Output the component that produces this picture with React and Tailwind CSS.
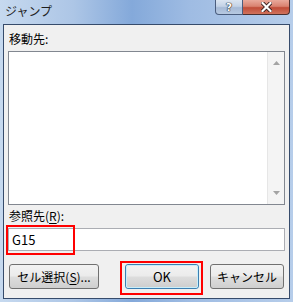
export default function App() {
  const font = { fontFamily: '"Noto Sans CJK JP", "Noto Sans", sans-serif' };
  return (
    <div
      className="relative w-[293px] h-[302px] flex flex-col text-[12px] text-black bg-[linear-gradient(90deg,#c6d9ef_0%,#adc6e6_25%,#84a9da_45%,#9fbce3_65%,#b6cdea_100%)]"
      style={font}
    >
      {/* title bar */}
      <div className="h-[24px] flex items-start shrink-0">
        <div className="pl-[5px] pt-[3px] text-[12px] leading-[16px] text-[#1e1e1e]">ジャンプ</div>
        <div className="ml-auto mr-[3px] flex">
          <div className="w-[28px] h-[15px] border border-t-0 border-[#4a5d7e] rounded-bl-[4px] bg-[linear-gradient(180deg,#dbe5f1_0%,#c3d2e6_45%,#a6bad6_55%,#b7c9e1_100%)] flex items-center justify-center">
            <span className="text-[11px] leading-none font-bold text-white [text-shadow:0_0_1px_#222,0_0_1px_#222,0_0_1px_#222]" style={{ fontFamily: '"DejaVu Sans", sans-serif' }}>?</span>
          </div>
          <div className="w-[47px] h-[15px] border border-t-0 border-l-0 border-[#4a2f2f] rounded-br-[4px] bg-[linear-gradient(180deg,#e9a99b_0%,#d98270_45%,#c04c38_55%,#d0735c_100%)] flex items-center justify-center">
            <svg width="11" height="10" viewBox="0 0 11 10">
              <path d="M1.5 1 L9.5 9 M9.5 1 L1.5 9" stroke="#3a2020" strokeWidth="4" strokeLinecap="square" />
              <path d="M1.5 1 L9.5 9 M9.5 1 L1.5 9" stroke="#ffffff" strokeWidth="2.2" strokeLinecap="square" />
            </svg>
          </div>
        </div>
      </div>

      {/* client area */}
      <div className="mx-[3px] h-[275px] border border-[#364b6b] bg-[#f0f0f0] flex flex-col px-[4px]">
        <div className="mt-[6px] h-[16px] leading-[16px] pl-[1px]">移動先:</div>
        <div className="mt-[4px] h-[154px] border border-[#828790] bg-white flex justify-end">
          <div className="w-[17px] h-full bg-[#f4f4f4] border-l border-[#e6e6e6] flex flex-col items-center justify-between py-[9px]">
            <svg width="7" height="4" viewBox="0 0 7 4"><path d="M0 4 L3.5 0 L7 4 Z" fill="#a3a3a3" /></svg>
            <svg width="7" height="4" viewBox="0 0 7 4"><path d="M0 0 L3.5 4 L7 0 Z" fill="#a3a3a3" /></svg>
          </div>
        </div>
        <div className="mt-[3px] h-[16px] leading-[16px] pl-[1px]">
          参照先(<span className="underline underline-offset-2">R</span>):
        </div>
        <div className="mt-[4px] h-[23px] border border-[#abadb3] bg-white flex items-center pl-[3px] text-[13px]">G15</div>
        <div className="mt-[13px] h-[25px] flex items-center">
          <button className="ml-[1px] w-[90px] h-[25px] rounded-[3px] border border-[#707070] bg-[linear-gradient(180deg,#f2f2f2_0%,#ebebeb_48%,#dddddd_52%,#cfcfcf_100%)] flex items-center justify-center text-[12px] leading-none">
            セル選択(<span className="underline underline-offset-2">S</span>)...
          </button>
          <button className="ml-[26px] w-[74px] h-[25px] rounded-[3px] border border-[#3c7fb1] bg-[linear-gradient(180deg,#eaf6fd_0%,#d9f0fc_48%,#bee6fd_52%,#a7d9f5_100%)] flex items-center justify-center text-[13px] leading-none shadow-[inset_0_0_0_1px_#9fe2f7]">
            <span className="w-full h-full rounded-[2px] border border-[#c8eefb] bg-[linear-gradient(180deg,#f2f2f2_0%,#ebebeb_48%,#dddddd_52%,#cfcfcf_100%)] flex items-center justify-center">OK</span>
          </button>
          <button className="ml-[11px] w-[74px] h-[25px] rounded-[3px] border border-[#707070] bg-[linear-gradient(180deg,#f2f2f2_0%,#ebebeb_48%,#dddddd_52%,#cfcfcf_100%)] flex items-center justify-center text-[12px] leading-none">
            キャンセル
          </button>
        </div>
      </div>

      {/* annotation boxes */}
      <div className="absolute left-[6px] top-[225px] w-[69px] h-[30px] border-2 border-[#ff0000] pointer-events-none" />
      <div className="absolute left-[120px] top-[261px] w-[83px] h-[34px] border-2 border-[#ff0000] pointer-events-none" />
    </div>
  );
}
